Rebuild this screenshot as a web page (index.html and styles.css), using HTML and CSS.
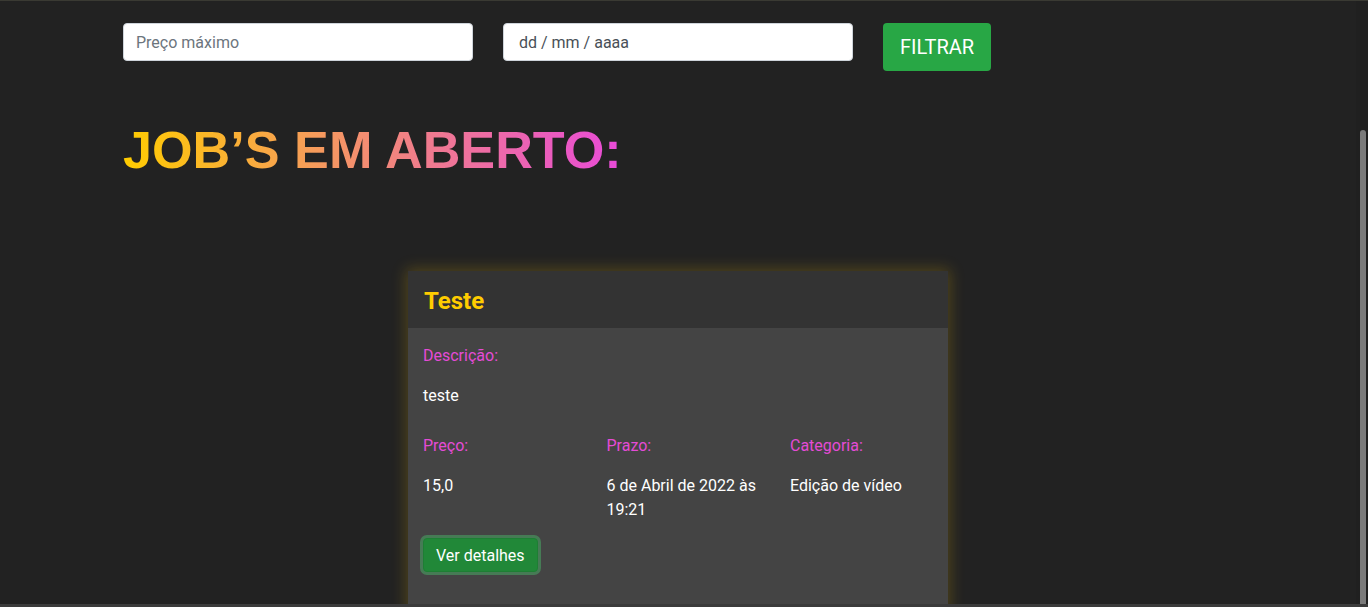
FILE: index.html
```html
<!DOCTYPE html>
<html lang="pt-BR">
<head>
<meta charset="utf-8">
<title>Jobs em aberto</title>
<link rel="stylesheet" href="styles.css">
</head>
<body>
<div class="screen">
  <main class="main">
    <div class="container">
      <form class="filters">
        <input class="field" type="text" placeholder="Preço máximo">
        <input class="field field-date" type="text" placeholder="dd / mm / aaaa">
        <button class="btn-filter" type="button">FILTRAR</button>
      </form>

      <h1 class="title"><span class="title-text">JOB’S EM ABERTO:</span></h1>

      <section class="card">
        <header class="card-header">
          <h2 class="card-title">Teste</h2>
        </header>
        <div class="card-body">
          <p class="label">Descrição:</p>
          <p class="value">teste</p>
          <div class="grid">
            <div class="cell">
              <p class="label">Preço:</p>
              <p class="value">15,0</p>
            </div>
            <div class="cell">
              <p class="label">Prazo:</p>
              <p class="value">6 de Abril de 2022 às 19:21</p>
            </div>
            <div class="cell">
              <p class="label">Categoria:</p>
              <p class="value">Edição de vídeo</p>
            </div>
          </div>
          <button class="btn-details" type="button">Ver detalhes</button>
        </div>
      </section>
    </div>
  </main>
  <div class="rail"><div class="thumb"></div></div>
</div>
<div class="taskbar"></div>
</body>
</html>
```

FILE: styles.css
```css
* { box-sizing: border-box; }

html, body {
  margin: 0;
  padding: 0;
  height: 100%;
}

body {
  background: #222222;
  border-top: 1px solid #3a3a33;
  font-family: Roboto, "Noto Sans", "Liberation Sans", sans-serif;
  color: #ffffff;
  display: flex;
  flex-direction: column;
  overflow: hidden;
}

.screen {
  flex: 1;
  display: flex;
  min-height: 0;
  overflow: hidden;
}

.main {
  flex: 1;
  min-width: 0;
}

.rail {
  width: 12px;
  flex: none;
  background: #202020;
  padding-top: 129px;
  display: flex;
  justify-content: center;
}

.thumb {
  width: 6px;
  height: 480px;
  margin-left: 2px;
  background: #7b7b7b;
  border-radius: 3px 3px 0 0;
}

.taskbar {
  height: 3px;
  flex: none;
  background: #3b3b3b;
}

.container {
  width: 1140px;
  margin: 0 auto;
  padding: 22px 15px 0;
}

.filters {
  display: flex;
  align-items: flex-start;
  gap: 30px;
}

.field {
  width: 350px;
  height: 38px;
  border: 1px solid #ced4da;
  border-radius: 4px;
  background: #ffffff;
  padding: 6px 12px;
  font-family: Roboto, "Noto Sans", sans-serif;
  font-size: 16px;
  color: #495057;
}

.field::placeholder {
  color: #6c757d;
}

.field-date {
  padding-left: 15px;
}

.field-date::placeholder {
  color: #495057;
}

.btn-filter {
  width: 108px;
  height: 48px;
  border: none;
  border-radius: 4px;
  background: #28a745;
  color: #ffffff;
  font-family: Roboto, "Noto Sans", sans-serif;
  font-size: 20px;
  padding: 0 16px;
}

.title {
  margin: 48px 0 0;
  font-family: "Liberation Sans", Arial, sans-serif;
  font-weight: 700;
  font-size: 52.2px;
  line-height: 62px;
}

.title-text {
  display: inline-block;
  background: linear-gradient(90deg, #ffcc00 0%, #f7a053 35%, #f07c8c 60%, #e84ad9 100%);
  -webkit-background-clip: text;
  background-clip: text;
  color: transparent;
}

.card {
  width: 540px;
  margin: 90px auto 0;
  box-shadow: 0 0 14px 2px rgba(255, 200, 0, 0.22);
}

.card-header {
  background: #333333;
  padding: 16px 16px 13px;
}

.card-title {
  margin: 0;
  font-size: 24px;
  line-height: 28px;
  font-weight: 700;
  color: #ffcc00;
}

.card-body {
  background: #444444;
  padding: 16px 15px 40px;
}

.label,
.value {
  margin: 0;
  font-size: 16px;
  line-height: 24px;
}

.label {
  color: #e44bd6;
  margin-bottom: 16px;
}

.value {
  color: #ffffff;
  margin-bottom: 26px;
}

.grid {
  display: grid;
  grid-template-columns: 183.5px 183.5px 1fr;
}

.grid .value {
  margin-bottom: 0;
}

.btn-details {
  margin: 16px 0 0 0;
  height: 34px;
  padding: 0 12px;
  border: 1px solid #1e7e34;
  border-radius: 4px;
  background: #218838;
  color: #ffffff;
  font-family: Roboto, "Noto Sans", sans-serif;
  font-size: 16px;
  box-shadow: 0 0 0 3px rgba(72, 160, 97, 0.6);
}
```
